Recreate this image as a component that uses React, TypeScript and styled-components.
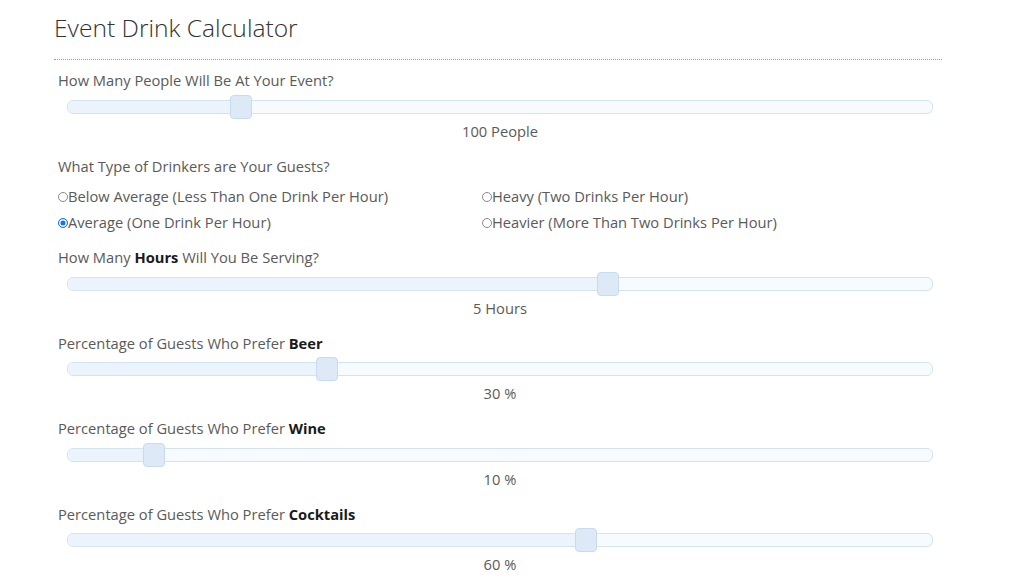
import React from 'react';
import styled, { createGlobalStyle } from 'styled-components';

const GlobalStyle = createGlobalStyle`
  body {
    margin: 0;
    background: #ffffff;
    font-family: 'Open Sans', 'Liberation Sans', sans-serif;
    color: #555;
  }
`;

const Page = styled.div`
  width: 888px;
  margin-left: 54px;
  padding-top: 12px;
`;

const Title = styled.h1`
  margin: 0;
  font-size: 24.6px;
  line-height: 32px;
  font-weight: 300;
  color: #333;
  padding-bottom: 15px;
  border-bottom: 1px dotted #9a9a9a;
`;

const Form = styled.div`
  padding: 10px 0 0 4px;
`;

const Label = styled.div`
  font-size: 14.7px;
  line-height: 20px;
  color: #5a5a5a;
  b {
    color: #1a1a1a;
    font-weight: 700;
  }
`;

const Section = styled.div`
  margin-bottom: 15px;
`;

const Track = styled.div`
  position: relative;
  margin: 9.5px 0 7px 9px;
  width: 864px;
  height: 12px;
  border: 1px solid #d4e3f0;
  border-radius: 6px;
  background: #f8fbfe;
`;

const Range = styled.div`
  height: 100%;
  border-radius: 6px 0 0 6px;
  background: #ebf4fc;
`;

const Handle = styled.div`
  position: absolute;
  top: -6px;
  width: 20px;
  height: 22px;
  margin-left: -11px;
  border: 1px solid #c6dbee;
  border-radius: 4px;
  background: #dde9f7;
`;

const Value = styled.div`
  text-align: center;
  font-size: 14.7px;
  line-height: 20px;
  color: #5a5a5a;
`;

const Options = styled.div`
  display: grid;
  grid-template-columns: 424px 1fr;
  margin: 7.5px 0 12px;
`;

const Option = styled.label`
  display: flex;
  align-items: center;
  font-size: 14.7px;
  line-height: 26px;
  color: #5a5a5a;
`;

const Dot = styled.span<{ $checked?: boolean }>`
  box-sizing: border-box;
  width: 10px;
  height: 10px;
  margin-top: 1px;
  border-radius: 50%;
  border: 1px solid ${(p) => (p.$checked ? '#1a73e8' : '#8a8a8a')};
  background: ${(p) => (p.$checked ? '#1a73e8' : '#fff')};
  box-shadow: ${(p) => (p.$checked ? 'inset 0 0 0 1.5px #fff' : 'none')};
`;

type SliderProps = {
  label: React.ReactNode;
  value: number;
  min: number;
  max: number;
  unit: string;
};

const Slider = ({ label, value, min, max, unit }: SliderProps) => {
  const pct = ((value - min) / (max - min)) * 100;
  return (
    <Section>
      <Label>{label}</Label>
      <Track>
        <Range style={{ width: `${pct}%` }} />
        <Handle style={{ left: `${pct}%` }} />
      </Track>
      <Value>
        {value} {unit}
      </Value>
    </Section>
  );
};

const App = () => (
  <Page>
    <GlobalStyle />
    <Title>Event Drink Calculator</Title>
    <Form>
      <Slider label="How Many People Will Be At Your Event?" value={100} min={0} max={500} unit="People" />
      <Label>What Type of Drinkers are Your Guests?</Label>
      <Options>
        <Option>
          <Dot />
          Below Average (Less Than One Drink Per Hour)
        </Option>
        <Option>
          <Dot />
          Heavy (Two Drinks Per Hour)
        </Option>
        <Option>
          <Dot $checked />
          Average (One Drink Per Hour)
        </Option>
        <Option>
          <Dot />
          Heavier (More Than Two Drinks Per Hour)
        </Option>
      </Options>
      <Slider
        label={
          <>
            How Many <b>Hours</b> Will You Be Serving?
          </>
        }
        value={5}
        min={0}
        max={8}
        unit="Hours"
      />
      <Slider
        label={
          <>
            Percentage of Guests Who Prefer <b>Beer</b>
          </>
        }
        value={30}
        min={0}
        max={100}
        unit="%"
      />
      <Slider
        label={
          <>
            Percentage of Guests Who Prefer <b>Wine</b>
          </>
        }
        value={10}
        min={0}
        max={100}
        unit="%"
      />
      <Slider
        label={
          <>
            Percentage of Guests Who Prefer <b>Cocktails</b>
          </>
        }
        value={60}
        min={0}
        max={100}
        unit="%"
      />
    </Form>
  </Page>
);

export default App;
